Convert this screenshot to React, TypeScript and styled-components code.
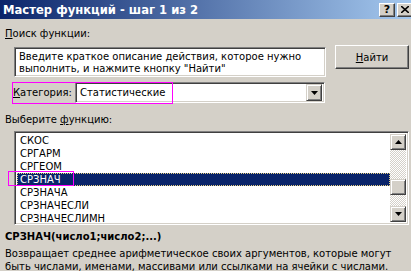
import React from 'react';
import styled, { createGlobalStyle } from 'styled-components';

const Global = createGlobalStyle`
  html, body { margin: 0; padding: 0; width: 411px; height: 271px; overflow: hidden; background: #d4d0c8; }
  #root { width: 411px; height: 271px; overflow: hidden; }
`;

const font = `"DejaVu Sans", Tahoma, sans-serif`;

const Window = styled.div`
  position: relative;
  width: 415px;
  height: 271px;
  background: #d4d0c8;
  font-family: ${font};
  font-size: 10px;
  color: #000;
  display: flex;
  flex-direction: column;
`;

const TitleBar = styled.div`
  height: 19px;
  flex: none;
  display: flex;
  align-items: center;
  padding: 0 2px 0 3px;
  background: linear-gradient(to right, #0a246a, #a6caf0);
  color: #fff;
  font-weight: bold;
  font-size: 11.6px;
`;

const Title = styled.div`
  flex: 1;
  white-space: nowrap;
`;

const TitleButton = styled.div`
  width: 16px;
  height: 14px;
  box-sizing: border-box;
  margin-left: 2px;
  background: #d4d0c8;
  border: 1px solid;
  border-color: #fff #404040 #404040 #fff;
  box-shadow: inset -1px -1px #808080;
  display: flex;
  align-items: center;
  justify-content: center;
  color: #000;
  font-weight: bold;
  font-size: 11px;
`;

const Content = styled.div`
  display: flex;
  flex-direction: column;
  padding: 0 6px 0 5px;
`;

const Label = styled.div<{ $top: number; $left?: number; $bold?: boolean }>`
  margin-top: ${p => p.$top}px;
  margin-left: ${p => p.$left ?? 0}px;
  line-height: 13px;
  white-space: nowrap;
  font-weight: ${p => (p.$bold ? 'bold' : 'normal')};
`;

const U = styled.span`
  text-decoration: underline;
`;

const Row = styled.div<{ $top: number }>`
  display: flex;
  align-items: flex-start;
  margin-top: ${p => p.$top}px;
`;

const Sunken = styled.div`
  box-sizing: border-box;
  background: #fff;
  border: 1px solid;
  border-color: #808080 #fff #fff #808080;
  box-shadow: inset 1px 1px #404040, inset -1px -1px #d4d0c8;
`;

const SearchBox = styled(Sunken)`
  margin: 2px 0 0 9px;
  width: 312px;
  height: 30px;
  padding: 3px 2px 0 4px;
  line-height: 12px;
  white-space: nowrap;
`;

const Button = styled.div`
  box-sizing: border-box;
  margin-left: 9px;
  width: 74px;
  height: 24px;
  background: #d4d0c8;
  border: 1px solid;
  border-color: #fff #404040 #404040 #fff;
  box-shadow: inset -1px -1px #808080;
  display: flex;
  align-items: center;
  justify-content: center;
`;

const CatLabel = styled.div`
  margin-left: 8px;
  width: 62px;
  height: 21px;
  line-height: 21px;
  white-space: nowrap;
`;

const Select = styled(Sunken)`
  width: 250px;
  height: 21px;
  display: flex;
  align-items: center;
  padding: 2px;
`;

const SelectText = styled.div`
  flex: 1;
  padding-left: 2px;
`;

const ArrowBtn = styled.div`
  box-sizing: border-box;
  width: 16px;
  height: 17px;
  background: #d4d0c8;
  border: 1px solid;
  border-color: #d4d0c8 #404040 #404040 #d4d0c8;
  box-shadow: inset 1px 1px #fff, inset -1px -1px #808080;
  display: flex;
  align-items: center;
  justify-content: center;
`;

const ListBox = styled(Sunken)`
  margin: 5px 0 0 9px;
  width: 395px;
  height: 94px;
  padding: 2px;
  display: flex;
`;

const Items = styled.div`
  flex: 1;
  display: flex;
  flex-direction: column;
`;

const Item = styled.div<{ $sel?: boolean }>`
  box-sizing: border-box;
  height: 13px;
  line-height: 11px;
  padding-left: 2px;
  border: 1px ${p => (p.$sel ? 'dotted #e8d080' : 'solid transparent')};
  background: ${p => (p.$sel ? '#0a246a' : 'transparent')};
  color: ${p => (p.$sel ? '#fff' : '#000')};
`;

const ScrollBar = styled.div`
  width: 16px;
  display: flex;
  flex-direction: column;
  background-color: #fff;
  background-image: repeating-conic-gradient(#d4d0c8 0% 25%, #fff 0% 50%);
  background-size: 2px 2px;
`;

const ScrollBtn = styled.div`
  box-sizing: border-box;
  width: 16px;
  height: 16px;
  flex: none;
  background: #d4d0c8;
  border: 1px solid;
  border-color: #d4d0c8 #404040 #404040 #d4d0c8;
  box-shadow: inset 1px 1px #fff, inset -1px -1px #808080;
  display: flex;
  align-items: center;
  justify-content: center;
`;

const Track = styled.div`
  flex: 1;
`;

const Description = styled.div`
  margin-top: 4px;
  line-height: 13px;
  white-space: nowrap;
`;

const Mark = styled.div`
  position: absolute;
  box-sizing: border-box;
  border: 1px solid #ff00ff;
  pointer-events: none;
`;

const Tri = ({ up }: { up?: boolean }) => (
  <svg width="7" height="4" viewBox="0 0 7 4">
    <path d={up ? 'M3.5 0 L7 4 L0 4 Z' : 'M0 0 L7 0 L3.5 4 Z'} fill="#000" />
  </svg>
);

const items = ['СКОС', 'СРГАРМ', 'СРГЕОМ', 'СРЗНАЧ', 'СРЗНАЧА', 'СРЗНАЧЕСЛИ', 'СРЗНАЧЕСЛИМН'];

export default function App() {
  const thumbOffset = 29;
  return (
    <>
      <Global />
      <Window>
        <TitleBar>
          <Title>Мастер функций - шаг 1 из 2</Title>
          <TitleButton>?</TitleButton>
          <TitleButton>
            <svg width="8" height="7" viewBox="0 0 8 7">
              <path d="M0 0 L8 7 M8 0 L0 7" stroke="#000" strokeWidth="1.6" />
            </svg>
          </TitleButton>
        </TitleBar>
        <Content>
          <Label $top={8}>
            <U>П</U>оиск функции:
          </Label>
          <Row $top={5}>
            <SearchBox>
              Введите краткое описание действия, которое нужно
              <br />
              выполнить, и нажмите кнопку "Найти"
            </SearchBox>
            <Button>
              <span>
                <U>Н</U>айти
              </span>
            </Button>
          </Row>
          <Row $top={5}>
            <CatLabel>
              <U>К</U>атегория:
            </CatLabel>
            <Select>
              <SelectText>Статистические</SelectText>
              <ArrowBtn>
                <Tri />
              </ArrowBtn>
            </Select>
          </Row>
          <Label $top={10}>
            Выберите <U>ф</U>ункцию:
          </Label>
          <ListBox>
            <Items>
              {items.map(it => (
                <Item key={it} $sel={it === 'СРЗНАЧ'}>
                  {it}
                </Item>
              ))}
            </Items>
            <ScrollBar>
              <ScrollBtn>
                <Tri up />
              </ScrollBtn>
              <Track>
                <ScrollBtn style={{ marginTop: thumbOffset }} />
              </Track>
              <ScrollBtn>
                <Tri />
              </ScrollBtn>
            </ScrollBar>
          </ListBox>
          <Label $top={5} $bold>
            СРЗНАЧ(число1;число2;...)
          </Label>
          <Description>
            Возвращает среднее арифметическое своих аргументов, которые могут
            <br />
            быть числами, именами, массивами или ссылками на ячейки с числами.
          </Description>
        </Content>
        <Mark style={{ left: 12, top: 82, width: 161, height: 22 }} />
        <Mark style={{ left: 8, top: 171, width: 66, height: 15 }} />
      </Window>
    </>
  );
}
